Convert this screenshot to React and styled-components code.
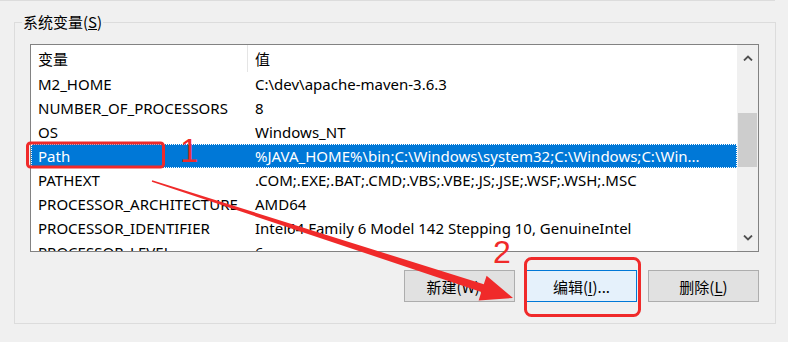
import React from "react";
import styled, { createGlobalStyle } from "styled-components";

const GlobalStyle = createGlobalStyle`
  html, body {
    margin: 0;
    padding: 0;
    background: #f0f0f0;
  }
  body {
    font-family: "Noto Sans", "Noto Sans CJK SC", sans-serif;
    font-size: 15px;
    color: #000;
  }
`;

const rows = [
  ["M2_HOME", "C:\\dev\\apache-maven-3.6.3"],
  ["NUMBER_OF_PROCESSORS", "8"],
  ["OS", "Windows_NT"],
  ["Path", "%JAVA_HOME%\\bin;C:\\Windows\\system32;C:\\Windows;C:\\Win..."],
  ["PATHEXT", ".COM;.EXE;.BAT;.CMD;.VBS;.VBE;.JS;.JSE;.WSF;.WSH;.MSC"],
  ["PROCESSOR_ARCHITECTURE", "AMD64"],
  ["PROCESSOR_IDENTIFIER", "Intel64 Family 6 Model 142 Stepping 10, GenuineIntel"],
  ["PROCESSOR_LEVEL", "6"],
];

const Page = styled.div`
  position: relative;
  width: 788px;
  height: 342px;
  overflow: hidden;
  background: #f0f0f0;
`;

const TopEdge = styled.div`
  width: 775px;
  height: 0;
  border-top: 1px solid #dcdcdc;
`;

const Group = styled.fieldset`
  box-sizing: border-box;
  margin: 12px 0 0 14px;
  padding: 13px 15px 0 15px;
  width: 762px;
  height: 311px;
  border: 1px solid #dcdcdc;
  min-width: 0;
`;

const Legend = styled.legend`
  padding: 0 1px;
  margin-left: -8px;
  line-height: 18px;
  font-size: 15px;
  font-family: "Noto Sans CJK SC", "Noto Sans", sans-serif;
`;

const ListBox = styled.div`
  box-sizing: border-box;
  width: 729px;
  height: 208px;
  border: 1px solid #828282;
  background: #fff;
  display: flex;
  overflow: hidden;
`;

const Grid = styled.div`
  flex: 1;
  display: flex;
  flex-direction: column;
  overflow: hidden;
`;

const HeaderRow = styled.div`
  display: flex;
  height: 27px;
  flex-shrink: 0;
`;

const HeaderCell = styled.div`
  box-sizing: border-box;
  width: ${(p) => p.$w || "auto"};
  flex: ${(p) => (p.$w ? "none" : 1)};
  padding-left: 7px;
  line-height: 27px;
  font-family: "Noto Sans CJK SC", sans-serif;
  border-right: ${(p) => (p.$sep ? "1px solid #e5e5e5" : "none")};
`;

const Row = styled.div`
  position: relative;
  display: flex;
  height: 24px;
  flex-shrink: 0;
  background: ${(p) => (p.$selected ? "#0078d7" : "transparent")};
  color: ${(p) => (p.$selected ? "#fff" : "#000")};
  outline: ${(p) => (p.$selected ? "1px dotted #fff" : "none")};
  outline-offset: -1px;
`;

const Cell = styled.div`
  box-sizing: border-box;
  width: ${(p) => p.$w || "auto"};
  flex: ${(p) => (p.$w ? "none" : 1)};
  padding-left: 7px;
  line-height: 24px;
  white-space: nowrap;
  overflow: hidden;
`;

const ScrollBar = styled.div`
  width: 21px;
  flex-shrink: 0;
  background: #f0f0f0;
  display: flex;
  flex-direction: column;
  align-items: center;
`;

const ArrowBtn = styled.div`
  height: 26px;
  width: 100%;
  display: flex;
  align-items: center;
  justify-content: center;
`;

const Track = styled.div`
  flex: 1;
  width: 100%;
  padding-top: 42px;
  box-sizing: border-box;
`;

const Thumb = styled.div`
  margin: 0 auto;
  width: 19px;
  height: 54px;
  background: #cdcdcd;
`;

const Buttons = styled.div`
  display: flex;
  justify-content: flex-end;
  gap: 11px;
  margin-top: 18px;
  width: 729px;
`;

const Button = styled.div`
  box-sizing: border-box;
  width: 111px;
  height: 32px;
  display: flex;
  align-items: center;
  justify-content: center;
  font-family: "Noto Sans CJK SC", sans-serif;
  font-size: 15px;
  background: ${(p) => (p.$focus ? "#e5f1fb" : "#e1e1e1")};
  border: 1px solid ${(p) => (p.$focus ? "#0078d7" : "#adadad")};
  u {
    text-decoration: underline;
    text-underline-offset: 2px;
  }
`;

const Overlay = styled.svg`
  position: absolute;
  left: 0;
  top: 0;
  pointer-events: none;
`;

const Chevron = ({ up }) => (
  <svg width="10" height="6" viewBox="0 0 10 6">
    <path
      d={up ? "M1 5.5 L5 1.5 L9 5.5" : "M1 0.5 L5 4.5 L9 0.5"}
      fill="none"
      stroke="#505050"
      strokeWidth="1.8"
    />
  </svg>
);

const red = "#f02a2a";

function arrowShape() {
  const sx = 152, sy = 181, tx = 513, ty = 298;
  const dx = tx - sx, dy = ty - sy;
  const len = Math.hypot(dx, dy);
  const ux = dx / len, uy = dy / len;
  const px = -uy, py = ux;
  const headL = 32, headW = 13;
  const bx = tx - ux * headL, by = ty - uy * headL;
  const pts = [
    [sx + px * 0.8, sy + py * 0.8],
    [bx + px * 4, by + py * 4],
    [bx + px * headW, by + py * headW],
    [tx, ty],
    [bx - px * headW, by - py * headW],
    [bx - px * 4, by - py * 4],
    [sx - px * 0.8, sy - py * 0.8],
  ];
  return pts.map((p) => p.map((v) => v.toFixed(1)).join(",")).join(" ");
}

export default function App() {
  return (
    <Page>
      <GlobalStyle />
      <TopEdge />
      <Group>
        <Legend>
          系统变量(<u>S</u>)
        </Legend>
        <ListBox>
          <Grid>
            <HeaderRow>
              <HeaderCell $w="217px" $sep>变量</HeaderCell>
              <HeaderCell>值</HeaderCell>
            </HeaderRow>
            {rows.map(([name, value]) => (
              <Row key={name} $selected={name === "Path"}>
                <Cell $w="217px">{name}</Cell>
                <Cell>{value}</Cell>
              </Row>
            ))}
          </Grid>
          <ScrollBar>
            <ArrowBtn>
              <Chevron up />
            </ArrowBtn>
            <Track>
              <Thumb />
            </Track>
            <ArrowBtn>
              <Chevron />
            </ArrowBtn>
          </ScrollBar>
        </ListBox>
        <Buttons>
          <Button>新建(W)...</Button>
          <Button $focus>
            编辑(<u>I</u>)...
          </Button>
          <Button>
            删除(<u>L</u>)
          </Button>
        </Buttons>
      </Group>
      <Overlay width="788" height="342" viewBox="0 0 788 342">
        <rect x="27.5" y="143" width="136" height="24" rx="3" fill="none" stroke={red} strokeWidth="3" />
        <text x="180" y="162" fill={red} fontFamily="Liberation Sans, sans-serif" fontSize="33">1</text>
        <rect x="525.5" y="258.5" width="114" height="57" rx="6" fill="none" stroke={red} strokeWidth="3" />
        <text x="493" y="263" fill={red} fontFamily="Liberation Sans, sans-serif" fontSize="32">2</text>
        <polygon points={arrowShape()} fill={red} />
      </Overlay>
    </Page>
  );
}
